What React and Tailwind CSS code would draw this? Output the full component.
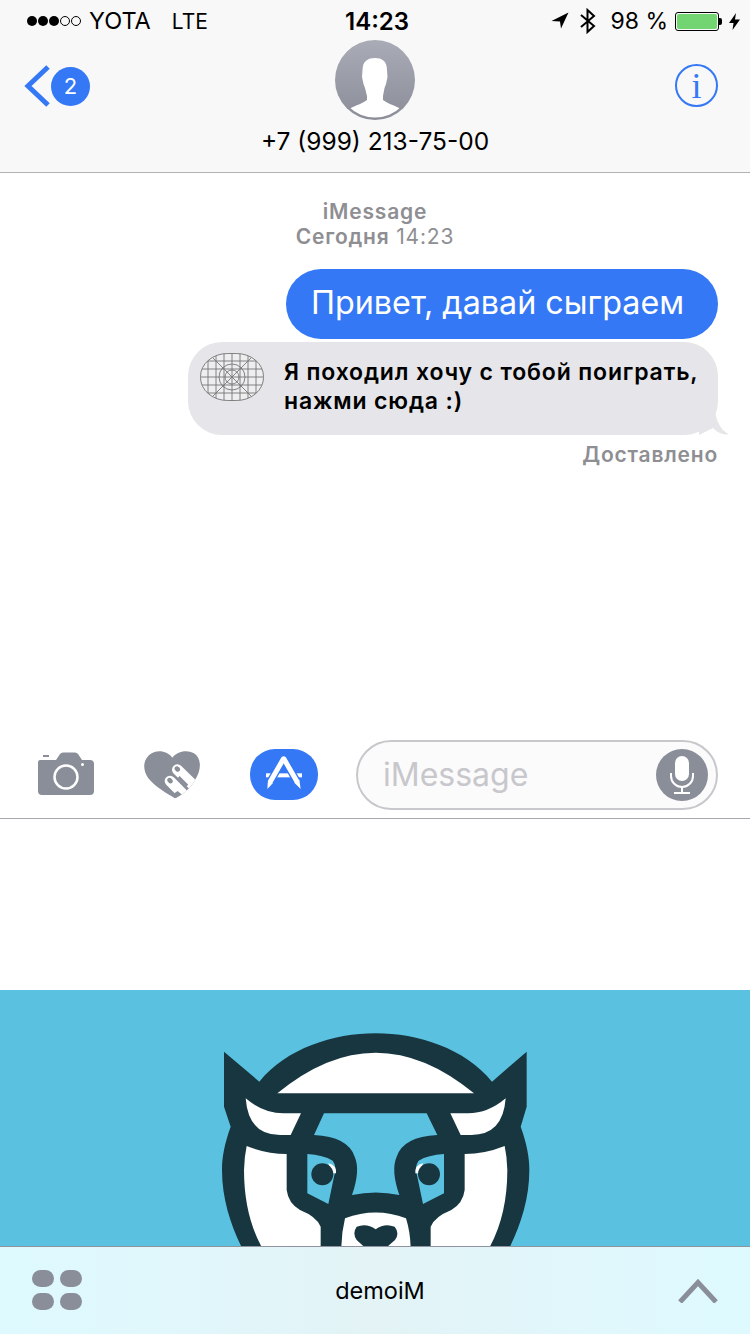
import React from "react";

const Signal = () => (
  <div className="flex items-center gap-[1px] w-[54px]">
    {[0, 1, 2].map((i) => (
      <span key={i} className="size-[10px] rounded-full bg-black" />
    ))}
    {[3, 4].map((i) => (
      <span key={i} className="size-[10px] rounded-full border border-black" />
    ))}
  </div>
);

const StatusBar = () => (
  <div className="relative h-[40px] flex items-center pl-[27px] pr-[10px] pt-[2px] text-[23.5px] leading-none text-black">
    <Signal />
    <span className="ml-[8px]">YOTA</span>
    <span className="ml-[21px] text-[21px]">LTE</span>
    <span className="absolute left-[345px] top-[10px] text-[24px] font-semibold">14:23</span>
    <div className="ml-auto flex items-center">
      <svg width="18" height="18" viewBox="0 0 18 18">
        <polygon points="17.5,0.5 0.5,9 9,9.5 10,16.5" fill="#000" />
      </svg>
      <svg className="ml-[11px]" width="16" height="26" viewBox="0 0 16 26" fill="none" stroke="#000" strokeWidth="2">
        <path d="M1,7 L14,18 L7.5,24 V2 L14,8 L1,19" />
      </svg>
      <span className="ml-[14px] text-[23px]">98 %</span>
      <div className="ml-[7px] w-[44px] h-[19px] border border-black rounded-[3px] p-[1px]">
        <div className="size-full rounded-[2px] bg-[#72d572]" />
      </div>
      <span className="w-[3px] h-[7px] bg-black rounded-r-[2px]" />
      <svg className="ml-[7px]" width="11" height="17" viewBox="0 0 11 17">
        <polygon points="7,0 0,10 4.5,10 3.5,17 11,6.5 6,6.5" fill="#000" />
      </svg>
    </div>
  </div>
);

const Avatar = () => (
  <div className="size-[80px] rounded-full bg-gradient-to-b from-[#a9acb7] to-[#8b8e98] overflow-hidden">
    <svg width="80" height="80" viewBox="0 0 80 80">
      <defs>
        <clipPath id="avatar-clip">
          <circle cx="40" cy="40" r="37.5" />
        </clipPath>
      </defs>
      <path
        clipPath="url(#avatar-clip)"
        d="M40,18 C47,18 52,21 52,30 L52.5,37 L51,44 L49.5,48 L48,56 L48,60 C50,62 60,66 66,69 L66,80 L14,80 L14,69 C20,66 30,62 32,60 L32,56 L30,48 L28.5,44 L27,37 L27.5,30 C27.5,21 33,18 40,18 Z"
        fill="#fff"
      />
    </svg>
  </div>
);

const Header = () => (
  <header className="h-[173px] shrink-0 bg-[#f8f8f8] border-b border-[#b2b2b2]">
    <StatusBar />
    <div className="relative flex flex-col items-center">
      <Avatar />
      <div className="mt-[5px] text-[24.5px] leading-[32px] text-black">+7 (999) 213-75-00</div>
      <div className="absolute left-[24px] top-[25px] flex items-center">
        <svg width="27" height="42" viewBox="0 0 27 42" fill="none" stroke="#3478f6" strokeWidth="5">
          <path d="M24,2 L4,21 L24,40" />
        </svg>
        <div className="size-[39px] rounded-full bg-[#3478f6] text-white text-[22px] flex items-center justify-center">
          2
        </div>
      </div>
      <div className="absolute right-[32px] top-[24px] size-[43px] rounded-full border-2 border-[#3478f6] text-[#3478f6] flex items-center justify-center text-[36px] font-['Liberation_Serif',serif] leading-none">
        i
      </div>
    </div>
  </header>
);

const GridIcon = () => {
  const xs = [8, 16, 24, 32, 40, 48, 56];
  const ys = [8, 16, 24, 32, 40];
  return (
    <svg width="64" height="48" viewBox="0 0 64 48" fill="none" stroke="#757575" strokeWidth="0.9">
      <defs>
        <clipPath id="grid-clip">
          <rect x="0.5" y="0.5" width="63" height="47" rx="27" ry="23" />
        </clipPath>
      </defs>
      <rect x="0.5" y="0.5" width="63" height="47" rx="27" ry="23" fill="#eeeef1" />
      <g clipPath="url(#grid-clip)">
        {xs.map((x) => (
          <line key={x} x1={x} y1="0" x2={x} y2="48" />
        ))}
        {ys.map((y) => (
          <line key={y} x1="0" y1={y} x2="64" y2={y} />
        ))}
        <line x1="10" y1="2" x2="54" y2="46" />
        <line x1="54" y1="2" x2="10" y2="46" />
        <circle cx="32" cy="24" r="7" />
        <circle cx="32" cy="24" r="13" />
      </g>
    </svg>
  );
};

const Messages = () => (
  <main className="h-[554px] shrink-0 px-[32px] flex flex-col items-end">
    <div className="self-center mt-[26px] text-center text-[21px] leading-[25px] tracking-[0.8px] text-[#8e8e93]">
      <div className="font-semibold">iMessage</div>
      <div>
        <span className="font-semibold">Сегодня</span> 14:23
      </div>
    </div>
    <div className="mt-[20px] h-[70px] w-[432px] pl-[25px] pb-[2px] rounded-[36px] bg-[#3478f6] text-white text-[32.3px] flex items-center">
      Привет, давай сыграем
    </div>
    <div className="relative mt-[3px] w-[530px] h-[93px] rounded-[34px] bg-[#e5e5ea] flex items-start pl-[12px] pt-[11px]">
      <GridIcon />
      <div className="ml-[20px] mt-[5px] text-[23px] leading-[29px] tracking-[0.85px] font-semibold text-black whitespace-nowrap">
        Я походил хочу с тобой поиграть,
        <br />
        нажми сюда :)
      </div>
      <svg className="absolute right-[-11px] bottom-0" width="30" height="36" viewBox="0 0 30 36">
        <path d="M15,0 C15,16 19,30 30,35.5 C24,36 19,34 14,29 L0,36 L0,0 Z" fill="#e5e5ea" />
      </svg>
    </div>
    <div className="mt-[7px] text-[21px] leading-[25px] tracking-[0.8px] font-semibold text-[#8e8e93]">Доставлено</div>
  </main>
);

const Camera = () => (
  <svg width="56" height="43" viewBox="0 0 56 43">
    <path
      d="M2,8 H9 V8 H18 L22,2 Q23,0.5 25,0.5 H37 Q39,0.5 40,2 L44,8 H52 Q56,8 56,12 V39 Q56,43 52,43 H4 Q0,43 0,39 V11 Q0,8 2,8 Z"
      fill="#8a8e99"
    />
    <rect x="5" y="3" width="6" height="2" fill="#8a8e99" />
    <circle cx="28" cy="25" r="11.5" fill="none" stroke="#fff" strokeWidth="2.5" />
    <circle cx="44.5" cy="12.5" r="1.5" fill="#fff" />
  </svg>
);

const HeartFingers = () => (
  <svg width="65" height="60" viewBox="0 0 195 180">
    <defs>
      <clipPath id="heart-clip">
        <path d="M97,38 C85,20 55,12 35,25 C10,40 5,70 25,100 C45,125 80,145 105,160 C135,145 155,125 165,105 C185,75 185,40 162,25 C140,12 110,20 97,38 Z" />
      </clipPath>
    </defs>
    <g clipPath="url(#heart-clip)">
      <rect width="195" height="180" fill="#8a8e99" />
      <line x1="112" y1="74" x2="185" y2="145" stroke="#fff" strokeWidth="32" strokeLinecap="round" />
      <line x1="90" y1="108" x2="140" y2="158" stroke="#fff" strokeWidth="32" strokeLinecap="round" />
      <ellipse cx="112" cy="72" rx="7" ry="9" transform="rotate(-45 112 72)" fill="#8a8e99" />
      <ellipse cx="90" cy="107" rx="7" ry="9" transform="rotate(-45 90 107)" fill="#8a8e99" />
      <line x1="116" y1="96" x2="142" y2="122" stroke="#8a8e99" strokeWidth="8" />
      <path d="M95,150 L105,162 L127,150 L113,138 Z" fill="#8a8e99" />
    </g>
  </svg>
);

const AppStore = () => (
  <div className="w-[68px] h-[51px] rounded-[25px] bg-[#3478f6]">
    <svg width="68" height="51" viewBox="0 12 204 153">
      <rect x="48" y="85" width="108" height="12" fill="#fff" />
      <path d="M100,42 L62,108" stroke="#3478f6" strokeWidth="23" />
      <path d="M102,42 L140,108" stroke="#3478f6" strokeWidth="23" />
      <path d="M100,42 L62,108" stroke="#fff" strokeWidth="15" strokeLinecap="round" />
      <polygon points="54,105 69,114 52,132" fill="#fff" />
      <path d="M102,42 L140,108" stroke="#fff" strokeWidth="15" strokeLinecap="round" />
      <polygon points="133,113 148,104 152,132" fill="#fff" />
    </svg>
  </div>
);

const InputBar = () => (
  <div className="h-[92px] shrink-0 border-b border-[#a7a7ad] flex items-start pl-[38px] pr-[32px] pt-[13px]">
    <div className="-mt-[1px] flex items-start">
      <div className="mt-[13px]">
        <Camera />
      </div>
      <div className="ml-[46px] mt-[6px]">
        <HeartFingers />
      </div>
      <div className="ml-[45px] mt-[10px]">
        <AppStore />
      </div>
    </div>
    <div className="ml-auto w-[362px] h-[70px] rounded-[35px] border-2 border-[#c8c8cc] bg-[#fbfbfb] flex items-center pl-[25px] pr-[8px]">
      <span className="text-[32px] text-[#c7c7cc]">iMessage</span>
      <div className="ml-auto size-[52px] rounded-full bg-[#8a8e99] flex items-center justify-center">
        <svg width="24" height="38" viewBox="0 0 24 38" fill="none" stroke="#fff" strokeWidth="2">
          <rect x="6" y="1" width="12" height="23" rx="6" fill="#fff" />
          <path d="M1,17 V20 A11,11 0 0 0 23,20 V17 M12,31 V37 M4,37 H20" />
        </svg>
      </div>
    </div>
  </div>
);

const CowLogo = () => (
  <svg width="350" height="217" viewBox="0 0 1050 651" className="shrink-0">
    <path
      d="M72,65 L178,155 C260,55 400,10 527,10 C654,10 794,55 876,155 L980,65 V230 L962,290 C980,340 988,380 988,420 C988,510 960,590 925,660 H129 C94,590 66,510 66,420 C66,380 74,340 92,290 L72,230 Z"
      fill="#17363f"
    />
    <path d="M232,190 Q527,-54 822,190 Z" fill="#fff" />
    <path d="M137,205 Q190,250 250,250 H303 L272,315 H240 Q145,315 137,205 Z" fill="#fff" />
    <path d="M917,205 Q864,250 804,250 H751 L782,315 H814 Q909,315 917,205 Z" fill="#fff" />
    <path
      d="M372,250 H680 L712,315 Q610,320 590,380 Q572,420 598,495 Q527,480 456,495 Q482,420 464,380 Q444,320 342,315 Z"
      fill="#5ac2e0"
    />
    <path
      d="M140,348 Q200,372 260,372 V480 Q265,520 300,540 Q350,560 362,590 V660 H190 Q132,560 132,420 Q133,380 140,348 Z"
      fill="#fff"
    />
    <path
      d="M914,348 Q854,372 794,372 V480 Q789,520 754,540 Q704,560 692,590 V660 H864 Q922,560 922,420 Q921,380 914,348 Z"
      fill="#fff"
    />
    <path d="M322,372 Q370,375 398,392 Q412,410 402,440 L385,522 L322,490 Z" fill="#5ac2e0" />
    <path d="M732,372 Q684,375 656,392 Q642,410 652,440 L669,522 L732,490 Z" fill="#5ac2e0" />
    <path d="M385,400 Q410,405 408,430 L396,430 Z" fill="#fff" />
    <path d="M669,400 Q644,405 646,430 L658,430 Z" fill="#fff" />
    <circle cx="367" cy="433" r="33" fill="#17363f" />
    <circle cx="687" cy="433" r="33" fill="#17363f" />
    <path d="M435,565 Q527,530 618,565 Q632,610 632,660 H424 Q424,610 435,565 Z" fill="#fff" />
    <path
      d="M470,590 Q500,578 527,598 Q554,578 584,590 Q600,610 585,630 L562,650 H492 L470,630 Q456,610 470,590 Z"
      fill="#17363f"
    />
  </svg>
);

const BottomBar = () => (
  <div className="h-[88px] shrink-0 border-t border-[#8f93a0] bg-gradient-to-r from-[#defaff] via-[#e3f3f6] to-[#defaff] flex items-center pl-[32px] pr-[32px]">
    <div className="grid grid-cols-2 gap-x-[6px] gap-y-[6px] w-[50px] -mt-[1px]">
      {[0, 1, 2, 3].map((i) => (
        <span key={i} className="w-[22px] h-[17px] rounded-full bg-[#8a8e99]" />
      ))}
    </div>
    <div className="flex-1 text-center text-[23.5px] mt-[1px] text-black">demoiM</div>
    <svg width="40" height="24" viewBox="0 0 40 24" fill="none" stroke="#8a8e99" strokeWidth="5">
      <path d="M2,23 L20,3.5 L38,23" />
    </svg>
  </div>
);

export default function App() {
  return (
    <div className="w-[750px] h-[1334px] flex flex-col bg-white overflow-hidden font-['Inter',sans-serif]">
      <Header />
      <Messages />
      <InputBar />
      <div className="h-[171px] shrink-0" />
      <div className="flex-1 min-h-0 overflow-hidden bg-[#5ac2e0] flex justify-center pt-[40px]">
        <CowLogo />
      </div>
      <BottomBar />
    </div>
  );
}
